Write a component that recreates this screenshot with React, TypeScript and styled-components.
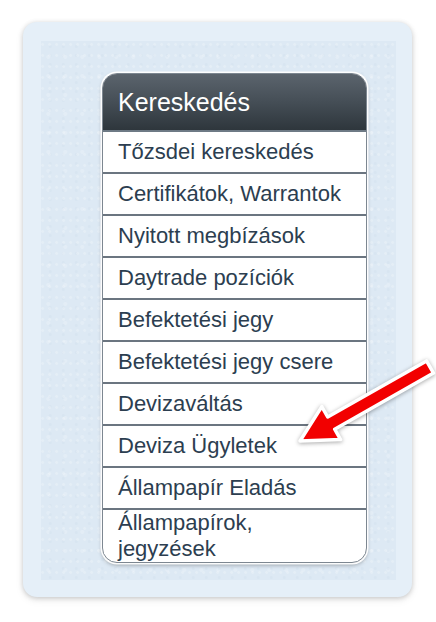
import React from "react";
import styled, { createGlobalStyle } from "styled-components";

const Global = createGlobalStyle`
  html, body { margin: 0; padding: 0; background: #ffffff; }
  body { font-family: "Liberation Sans", Arial, Helvetica, sans-serif; }
`;

const Page = styled.div`
  position: relative;
  width: 436px;
  height: 622px;
  padding: 22px 0 0 23px;
  box-sizing: border-box;
`;

const Card = styled.div`
  width: 389px;
  height: 575px;
  box-sizing: border-box;
  padding: 19px 16px 17px 18px;
  background: #e5eff8;
  border-radius: 14px;
  box-shadow: 0 1px 5px rgba(0, 0, 0, 0.18), 0 3px 8px rgba(0, 0, 0, 0.08);
`;

const Texture = styled.div`
  height: 100%;
  box-sizing: border-box;
  padding: 32px 29px 0 61px;
  background-color: #dde9f4;
  background-image:
    radial-gradient(circle at 23% 31%, rgba(255,255,255,0.22) 0 1px, transparent 2px),
    radial-gradient(circle at 71% 62%, rgba(200,216,232,0.22) 0 1px, transparent 2px),
    radial-gradient(circle at 43% 84%, rgba(255,255,255,0.18) 0 1.5px, transparent 2.5px);
  background-size: 7px 11px, 13px 9px, 17px 19px;
`;

const Menu = styled.div`
  width: 265px;
  box-sizing: border-box;
  background: #ffffff;
  border-radius: 15px;
  border: 1px solid #7d8791;
  overflow: hidden;
  box-shadow: 0 0 0 1.5px rgba(255, 255, 255, 0.95), 0 2px 4px rgba(0, 0, 0, 0.35);
`;

const Header = styled.div`
  height: 56px;
  padding-left: 15px;
  display: flex;
  align-items: center;
  color: #ffffff;
  font-size: 25px;
  background: linear-gradient(to bottom, #5b646d 0%, #454e56 50%, #2e363c 100%);
  border-bottom: 2px solid #6e7a85;
`;

const Item = styled.div<{ $tall?: boolean; $first?: boolean }>`
  box-sizing: content-box;
  padding: 0 16px 0 15px;
  font-size: 22px;
  color: #2c3e50;
  line-height: ${(p) => (p.$tall ? "26px" : "40px")};
  height: ${(p) => (p.$tall ? "52px" : "40px")};
  border-top: ${(p) => (p.$first ? "none" : "2px solid #6b7580")};
`;

const ArrowLayer = styled.svg`
  position: absolute;
  left: 288px;
  top: 348px;
  overflow: visible;
  filter: drop-shadow(0 1px 2px rgba(0, 0, 0, 0.35));
`;

const items = [
  "Tőzsdei kereskedés",
  "Certifikátok, Warrantok",
  "Nyitott megbízások",
  "Daytrade pozíciók",
  "Befektetési jegy",
  "Befektetési jegy csere",
  "Devizaváltás",
  "Deviza Ügyletek",
  "Állampapír Eladás",
];

export default function App() {
  return (
    <Page>
      <Global />
      <Card>
        <Texture>
          <Menu>
            <Header>Kereskedés</Header>
            {items.map((t, i) => (
              <Item key={t} $first={i === 0}>
                {t}
              </Item>
            ))}
            <Item $tall>Állampapírok, jegyzések</Item>
          </Menu>
        </Texture>
      </Card>
      <ArrowLayer width="150" height="104" viewBox="0 0 150 104">
        <polygon
          points="12,93 33.8,58.6 39.7,69 138.5,12.9 145.5,25.1 46.7,81.2 52.6,91.6"
          fill="#f20000"
          stroke="#ffffff"
          strokeWidth="3.5"
          strokeLinejoin="round"
        />
      </ArrowLayer>
    </Page>
  );
}
